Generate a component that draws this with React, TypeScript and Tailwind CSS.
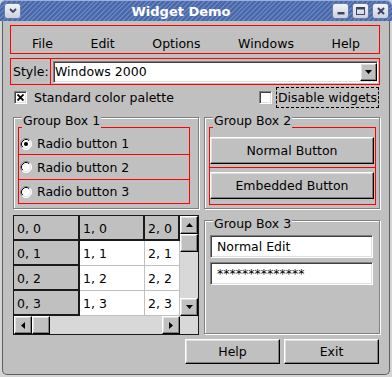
import React from 'react';

const raised =
  'bg-[#c0c0c0] border border-t-white border-l-white border-r-black border-b-black shadow-[inset_-1px_-1px_0_#808080,inset_1px_1px_0_#dfdfdf]';
const sunken =
  'border border-t-[#808080] border-l-[#808080] border-r-white border-b-white shadow-[inset_1px_1px_0_#404040,inset_-1px_-1px_0_#dfdfdf]';

type Dir = 'up' | 'down' | 'left' | 'right';

const Arrow: React.FC<{ dir: Dir }> = ({ dir }) => {
  const d = {
    up: 'M0 4 L3.5 0 L7 4 Z',
    down: 'M0 0 L7 0 L3.5 4 Z',
    left: 'M4 0 L4 7 L0 3.5 Z',
    right: 'M0 0 L4 3.5 L0 7 Z',
  }[dir];
  const vertical = dir === 'up' || dir === 'down';
  return (
    <svg width={vertical ? 7 : 4} height={vertical ? 4 : 7} viewBox={vertical ? '0 0 7 4' : '0 0 4 7'}>
      <path d={d} fill="#000" />
    </svg>
  );
};

const ArrowButton: React.FC<{ dir: Dir; className?: string }> = ({ dir, className = '' }) => (
  <div className={`${raised} w-[18px] h-[18px] shrink-0 flex items-center justify-center ${className}`}>
    <Arrow dir={dir} />
  </div>
);

const CheckBox: React.FC<{ checked?: boolean }> = ({ checked }) => (
  <div className={`${sunken} bg-white w-[13px] h-[13px] shrink-0 flex items-center justify-center`}>
    {checked && (
      <svg width="7" height="7" viewBox="0 0 7 7">
        <path d="M0.5 0.5 L6.5 6.5 M6.5 0.5 L0.5 6.5" stroke="#000" strokeWidth="1.8" />
      </svg>
    )}
  </div>
);

const Radio: React.FC<{ checked?: boolean }> = ({ checked }) => (
  <svg width="12" height="12" viewBox="0 0 12 12" className="shrink-0">
    <circle cx="6" cy="6" r="5.5" fill="#fff" />
    <path d="M2.11 9.89 A5.5 5.5 0 0 1 9.89 2.11" stroke="#808080" fill="none" />
    <path d="M9.89 2.11 A5.5 5.5 0 0 1 2.11 9.89" stroke="#ffffff" fill="none" />
    <path d="M2.82 9.18 A4.5 4.5 0 0 1 9.18 2.82" stroke="#000" fill="none" />
    <path d="M9.18 2.82 A4.5 4.5 0 0 1 2.82 9.18" stroke="#dfdfdf" fill="none" />
    {checked && <circle cx="6" cy="6" r="2" fill="#000" />}
  </svg>
);

const GroupBox: React.FC<{ title: string; className?: string; children?: React.ReactNode }> = ({
  title,
  className = '',
  children,
}) => (
  <div className={`relative border border-[#808080] shadow-[inset_1px_1px_0_#fff,1px_1px_0_#fff] ${className}`}>
    <span className="absolute left-[8px] top-[-5px] px-[1px] bg-[#c0c0c0]">{title}</span>
    {children}
  </div>
);

const TitleButton: React.FC<{ children: React.ReactNode }> = ({ children }) => (
  <div className="w-[17px] h-[16px] rounded-[3px] border border-[#6b7ca3] bg-[linear-gradient(#f2f4f9,#c9d1e1)] flex items-center justify-center">
    {children}
  </div>
);

const TitleBar: React.FC = () => (
  <div className="h-[21px] rounded-t-[6px] flex items-center bg-[image:repeating-linear-gradient(135deg,#4a68a8_0px,#4a68a8_2px,#6583c0_2px,#6583c0_3.4px)] shadow-[inset_0_1px_0_#9bb1dc]">
    <div className="ml-[4px]">
      <TitleButton>
        <svg width="8" height="5" viewBox="0 0 8 5">
          <path d="M1 1 L4 4 L7 1" stroke="#3c4660" strokeWidth="1.8" fill="none" />
        </svg>
      </TitleButton>
    </div>
    <div className="flex-1 flex justify-center pl-[9px] pt-[2px] text-white font-bold text-[13px]">Widget Demo</div>
    <div className="flex gap-[3px] mr-[3px]">
      <TitleButton>
        <svg width="8" height="8" viewBox="0 0 8 8">
          <rect x="0.5" y="5" width="7" height="2.5" fill="#3c4660" />
        </svg>
      </TitleButton>
      <TitleButton>
        <svg width="9" height="8" viewBox="0 0 9 8">
          <rect x="0.5" y="0.5" width="8" height="7" stroke="#3c4660" fill="none" />
          <rect x="0.5" y="0.5" width="8" height="2" fill="#3c4660" />
        </svg>
      </TitleButton>
      <TitleButton>
        <svg width="8" height="8" viewBox="0 0 8 8">
          <path d="M1 1 L7 7 M7 1 L1 7" stroke="#3c4660" strokeWidth="2" />
        </svg>
      </TitleButton>
    </div>
  </div>
);

const greyCell = 'bg-[#c0c0c0] shadow-[inset_-2px_-2px_0_#1a1a1a] pl-[3px] flex items-center overflow-hidden whitespace-nowrap';
const whiteCell = 'bg-white border-r border-b border-[#c0c0c0] pl-[3px] flex items-center overflow-hidden whitespace-nowrap';

const Table: React.FC = () => {
  const rows = [0, 1, 2, 3];
  return (
    <div className="w-[186px] h-[120px] border border-[#1a1a1a] flex flex-col shrink-0">
      <div className="flex h-[100px]">
        <div className="w-[166px] grid grid-cols-[66px_65px_35px] grid-rows-[repeat(4,25px)]">
          {rows.map((r) =>
            [0, 1, 2].map((c) => (
              <div key={`${r}-${c}`} className={r === 0 || c === 0 ? greyCell : whiteCell}>
                {c}, {r}
              </div>
            ))
          )}
        </div>
        <div className="w-[18px] flex flex-col">
          <ArrowButton dir="up" />
          <div className={`${raised} h-[18px]`} />
          <div className="flex-1 bg-[#d8d8d8]" />
          <ArrowButton dir="down" />
        </div>
      </div>
      <div className="flex h-[18px]">
        <div className="w-[166px] flex">
          <ArrowButton dir="left" />
          <div className={`${raised} w-[18px]`} />
          <div className="flex-1 bg-[#d8d8d8]" />
          <ArrowButton dir="right" />
        </div>
        <div className="w-[18px] bg-[#d8d8d8]" />
      </div>
    </div>
  );
};

const App: React.FC = () => {
  return (
    <div className="w-[392px] h-[377px] bg-[#d4d4d4] overflow-hidden font-['DejaVu_Sans','Liberation_Sans',sans-serif] text-[12.5px] leading-[15px] text-black">
      <TitleBar />
      <div className="mx-[2px] h-[354px] bg-[#c0c0c0] border-x border-b border-[#5e5e5e] rounded-b-[5px] flex flex-col">
        {/* menu bar */}
        <div className="ml-[7px] mt-[4px] w-[370px] h-[29px] border border-[#ff0000] flex justify-between pl-[21px] pr-[19px] pt-[10px]">
          {['File', 'Edit', 'Options', 'Windows', 'Help'].map((m) => (
            <span key={m}>{m}</span>
          ))}
        </div>

        {/* style combo */}
        <div className="ml-[7px] mt-[4px] flex h-[27px]">
          <div className="w-[41px] h-full border border-[#ff0000] flex items-center pl-[2px]">Style:</div>
          <div className="w-[330px] h-full border border-[#ff0000] -ml-px flex items-center pl-[2px]">
            <div className={`${sunken} bg-white w-[325px] h-[22px] flex items-center justify-between pl-[1px]`}>
              <span>Windows 2000</span>
              <div className={`${raised} w-[17px] h-[18px] flex items-center justify-center`}>
                <Arrow dir="down" />
              </div>
            </div>
          </div>
        </div>

        {/* checkboxes */}
        <div className="mt-[2px] h-[21px] flex items-center pl-[11px] pr-[10px]">
          <CheckBox checked />
          <span className="ml-[7px]">Standard color palette</span>
          <div className="ml-auto flex items-center">
            <CheckBox />
            <span className="ml-[4px] h-[21px] border border-dashed border-black px-[1px] flex items-center">
              Disable widgets
            </span>
          </div>
        </div>

        {/* group boxes 1 & 2 */}
        <div className="mt-[9px] ml-[10px] flex gap-[5px]">
          <GroupBox title="Group Box 1" className="w-[186px] h-[92px]">
            <div className="ml-[4px] mt-[9px] w-[172px] h-[77px] border border-[#ff0000] flex flex-col">
              <div className="h-[27px] border-b border-[#ff0000] pt-[5px] pl-[1px] flex items-center">
                <Radio checked />
                <span className="ml-[5px]">Radio button 1</span>
              </div>
              <div className="h-[25px] border-b border-[#ff0000] pl-[1px] flex items-center">
                <Radio />
                <span className="ml-[5px]">Radio button 2</span>
              </div>
              <div className="flex-1 pl-[1px] flex items-center">
                <Radio />
                <span className="ml-[5px]">Radio button 3</span>
              </div>
            </div>
          </GroupBox>
          <GroupBox title="Group Box 2" className="w-[176px] h-[92px]">
            <div className="ml-[4px] mt-[9px] w-[167px] h-[78px] border border-[#ff0000] flex flex-col">
              <div className="h-[40px] border-b border-[#ff0000] pt-[9px]">
                <div className={`${raised} w-[164px] h-[27px] flex items-center justify-center`}>Normal Button</div>
              </div>
              <div className="flex-1 pt-[4px]">
                <div className={`${raised} w-[164px] h-[27px] flex items-center justify-center`}>Embedded Button</div>
              </div>
            </div>
          </GroupBox>
        </div>

        {/* table & group box 3 */}
        <div className="mt-[6px] ml-[10px] flex items-start gap-[5px]">
          <Table />
          <GroupBox title="Group Box 3" className="mt-[5px] w-[176px] h-[114px]">
            <div className="ml-[5px] mt-[14px] flex flex-col gap-[4px]">
              <div className={`${sunken} bg-white w-[163px] h-[23px] flex items-center pl-[6px]`}>Normal Edit</div>
              <div className={`${sunken} bg-white w-[163px] h-[23px] flex items-center pl-[6px]`}>
                {'*'.repeat(14)}
              </div>
            </div>
          </GroupBox>
        </div>

        {/* dialog buttons */}
        <div className="mt-[4px] flex justify-end gap-[4px] pr-[10px]">
          <div className={`${raised} w-[95px] h-[25px] flex items-center justify-center`}>Help</div>
          <div className={`${raised} w-[95px] h-[25px] flex items-center justify-center`}>Exit</div>
        </div>
      </div>
    </div>
  );
};

export default App;
